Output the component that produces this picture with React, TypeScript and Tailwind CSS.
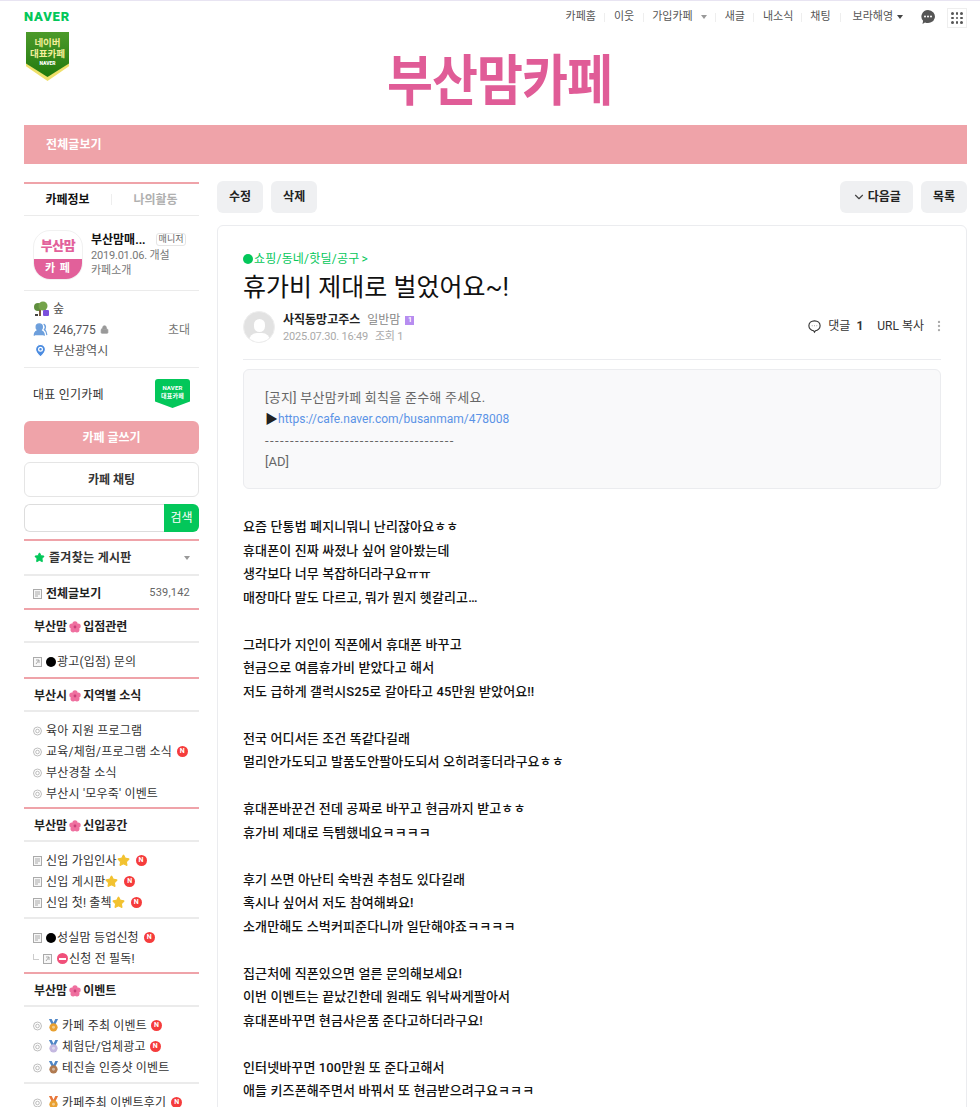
import { ChevronDown, EllipsisVertical, Lock, MapPin, Star, UsersRound } from 'lucide-react';
import type { ReactNode } from 'react';

const FONT = "font-['Roboto','Noto_Sans_CJK_KR',sans-serif]";

function Flower() {
  return (
    <svg viewBox="0 0 12 12" className="w-[12px] h-[12px] mx-[2px] shrink-0">
      <circle cx="6" cy="2.9" r="2.6" fill="#ef6f9f" />
      <circle cx="9.1" cy="5.1" r="2.6" fill="#ef6f9f" />
      <circle cx="7.9" cy="8.8" r="2.6" fill="#ef6f9f" />
      <circle cx="4.1" cy="8.8" r="2.6" fill="#ef6f9f" />
      <circle cx="2.9" cy="5.1" r="2.6" fill="#ef6f9f" />
      <circle cx="6" cy="6" r="1.4" fill="#c93f78" />
    </svg>
  );
}

function NewBadge({ className = '' }: { className?: string }) {
  return (
    <span className={`inline-flex items-center justify-center w-[11px] h-[11px] rounded-full bg-[#f53c3c] text-white text-[7px] font-bold leading-none shrink-0 ${className}`}>
      N
    </span>
  );
}

function DocIcon() {
  return (
    <svg viewBox="0 0 9 10" className="w-[9px] h-[10px] shrink-0" fill="none" stroke="#aaa">
      <rect x="0.5" y="0.5" width="8" height="9" fill="#f7f7f7" />
      <path d="M2 3h5M2 5h5M2 7h3" />
    </svg>
  );
}

function LinkIcon() {
  return (
    <svg viewBox="0 0 9 10" className="w-[9px] h-[10px] shrink-0" fill="none" stroke="#aaa">
      <rect x="0.5" y="0.5" width="8" height="9" fill="#f7f7f7" />
      <path d="M3 3h3v3M6 3L3 7" />
    </svg>
  );
}

function RingIcon() {
  return (
    <svg viewBox="0 0 10 10" className="w-[9px] h-[10px] shrink-0" fill="none" stroke="#b5b5b5">
      <circle cx="5" cy="5" r="4.4" />
      <circle cx="5" cy="5" r="2" />
    </svg>
  );
}

function GoldStar() {
  return <Star className="w-[13px] h-[13px] shrink-0 text-[#f2c230] fill-[#f2c230]" />;
}

function Medal({ color, ribbon = '#4f86c6' }: { color: string; ribbon?: string }) {
  return (
    <svg viewBox="0 0 12 14" className="w-[11px] h-[13px] ml-[2px] mr-[3px] shrink-0">
      <path d="M1 0h3l2 4 2-4h3L8 6H4z" fill={ribbon} />
      <circle cx="6" cy="9" r="4.5" fill={color} />
      <circle cx="6" cy="9" r="1.6" fill="#fff" fillOpacity="0.45" />
    </svg>
  );
}

function BlackDot() {
  return <span className="inline-block w-[10px] h-[10px] rounded-full bg-black mr-[1px] shrink-0" />;
}

function Row({ icon, children }: { icon: ReactNode; children: ReactNode }) {
  return (
    <div className="h-[21px] flex items-center text-[12px] tracking-[0.2px] text-[#333] whitespace-nowrap pl-[9px]">
      {icon}
      <span className="ml-[4px] flex items-center">{children}</span>
    </div>
  );
}

function SectionHead({ left, right }: { left: string; right: string }) {
  return (
    <div className="h-[33px] pt-[3px] border-t-2 border-[#efa3a9] flex items-center pl-[10px] text-[12px] font-bold text-[#222]">
      {left}
      <Flower />
      {right}
    </div>
  );
}

function Group({ children, className = 'pb-[4px]' }: { children: ReactNode; className?: string }) {
  return <div className={`border-t-2 border-[#ebebeb] pt-[8px] ${className}`}>{children}</div>;
}

function Sidebar() {
  return (
    <aside className="w-[175px] shrink-0">
      <div className="border-t-2 border-[#efa3a9] h-[34px] flex items-center text-[12px] font-bold border-b border-b-[#ebebeb]">
        <div className="flex-1 text-center text-[#111]">카페정보</div>
        <div className="w-px h-[11px] bg-[#eee]" />
        <div className="flex-1 text-center text-[#b0b0b0]">나의활동</div>
      </div>

      <div className="h-[75px] border-b border-[#ebebeb] flex items-start pl-[9px] pt-[14px]">
        <div className="w-[50px] h-[50px] rounded-[17px] overflow-hidden shrink-0 flex flex-col border border-[#f1f1f1]">
          <div className="flex-1 flex items-center justify-center text-[13px] leading-none font-black text-[#e2609a] tracking-[-0.5px] pt-[1px]">
            부산맘
          </div>
          <div className="h-[20px] bg-[#e2609a] text-white text-[11px] font-bold flex items-center justify-center tracking-[1px]">
            카 페
          </div>
        </div>
        <div className="ml-[8px] mt-[1px]">
          <div className="flex items-center h-[17px]">
            <span className="text-[12px] font-bold text-[#111] whitespace-nowrap">부산맘매...</span>
            <span className="ml-[10px] border border-[#e5e5e5] rounded-[3px] text-[9px] px-[2px] h-[13px] flex items-center text-[#666] whitespace-nowrap">매니저</span>
          </div>
          <div className="text-[11px] text-[#777] leading-[15px] whitespace-nowrap tracking-[-0.2px]">2019.01.06. 개설</div>
          <div className="text-[11px] text-[#777] leading-[15px]">카페소개</div>
        </div>
      </div>

      <div className="h-[77px] border-b border-[#ebebeb] pl-[9px] pt-[7px] text-[12px] text-[#555]">
        <div className="h-[21px] flex items-center">
          <svg viewBox="0 0 16 16" className="w-[16px] h-[16px] shrink-0">
            <circle cx="5" cy="6" r="4" fill="#5f8f3e" />
            <circle cx="10" cy="5" r="4.5" fill="#74a34a" />
            <rect x="6" y="9" width="2" height="6" fill="#7a5a3a" />
            <rect x="2" y="13" width="3" height="2" fill="#444" />
            <rect x="10" y="9" width="6" height="6" rx="1" fill="#7b4fdc" />
          </svg>
          <span className="ml-[4px]">숲</span>
        </div>
        <div className="h-[21px] flex items-center">
          <UsersRound className="w-[15px] h-[15px] text-[#6d9fdc] fill-[#6d9fdc] shrink-0" />
          <span className="ml-[5px]">246,775</span>
          <Lock className="w-[9px] h-[9px] ml-[4px] text-[#999] fill-[#999]" />
          <span className="ml-auto mr-[9px] text-[#777]">초대</span>
        </div>
        <div className="h-[21px] flex items-center">
          <MapPin className="w-[15px] h-[15px] text-white fill-[#4a8be0] shrink-0" />
          <span className="ml-[5px]">부산광역시</span>
        </div>
      </div>

      <div className="h-[53px] flex items-center justify-between pl-[9px] pr-[9px] text-[12px] tracking-[0.2px] text-[#333]">
        <span>대표 인기카페</span>
        <div className="w-[35px] h-[29px] -mt-[2px] bg-[#03c75a] text-white text-[6px] font-bold leading-[8px] text-center pt-[5px] rounded-t-[3px] [clip-path:polygon(0_0,100%_0,100%_78%,50%_100%,0_78%)]">
          NAVER
          <br />
          대표카페
        </div>
      </div>

      <div className="h-[33px] rounded-[6px] bg-[#efa3a9] text-white text-[12px] font-bold flex items-center justify-center">카페 글쓰기</div>
      <div className="h-[35px] mt-[8px] rounded-[6px] border border-[#e5e5e5] text-[12px] font-bold text-[#333] flex items-center justify-center">카페 채팅</div>
      <div className="h-[28px] mt-[7px] flex">
        <div className="flex-1 rounded-l-[6px] border border-[#ddd] border-r-0" />
        <div className="w-[35px] rounded-r-[6px] bg-[#03c75a] text-white text-[12px] flex items-center justify-center">검색</div>
      </div>

      <div className="mt-[7px] h-[35px] border-t-2 border-[#efa3a9] flex items-center pl-[10px] pr-[9px] text-[12px] font-bold tracking-[0.3px] text-[#333]">
        <Star className="w-[11px] h-[11px] text-[#03c75a] fill-[#03c75a] mr-[4px]" />
        즐겨찾는 게시판
        <span className="ml-auto w-0 h-0 border-x-[3px] border-x-transparent border-t-[4px] border-t-[#999]" />
      </div>
      <div className="h-[34px] pt-[3px] border-t-2 border-[#ebebeb] flex items-center pl-[9px] pr-[9px] text-[12px]">
        <DocIcon />
        <span className="ml-[4px] font-bold text-[#222]">전체글보기</span>
        <span className="ml-auto text-[11px] tracking-[0.2px] text-[#666]">539,142</span>
      </div>

      <SectionHead left="부산맘" right="입점관련" />
      <Group className="pb-[5px]">
        <Row icon={<LinkIcon />}>
          <BlackDot />광고(입점) 문의
        </Row>
      </Group>

      <SectionHead left="부산시" right="지역별 소식" />
      <Group className="pb-[3px]">
        <Row icon={<RingIcon />}>육아 지원 프로그램</Row>
        <Row icon={<RingIcon />}>
          교육/체험/프로그램 소식<NewBadge className="ml-[5px]" />
        </Row>
        <Row icon={<RingIcon />}>부산경찰 소식</Row>
        <Row icon={<RingIcon />}>부산시 '모우죽' 이벤트</Row>
      </Group>

      <SectionHead left="부산맘" right="신입공간" />
      <Group>
        <Row icon={<DocIcon />}>
          신입 가입인사<GoldStar /><NewBadge className="ml-[6px]" />
        </Row>
        <Row icon={<DocIcon />}>
          신입 게시판<GoldStar /><NewBadge className="ml-[6px]" />
        </Row>
        <Row icon={<DocIcon />}>
          신입 첫! 출첵<GoldStar /><NewBadge className="ml-[6px]" />
        </Row>
      </Group>
      <Group className="pb-[3px]">
        <Row icon={<DocIcon />}>
          <BlackDot />성실맘 등업신청<NewBadge className="ml-[5px]" />
        </Row>
        <Row
          icon={
            <>
              <span className="w-[6px] h-[6px] border-l border-b border-[#ccc] mr-[4px] -mt-[4px]" />
              <LinkIcon />
            </>
          }
        >
          <span className="w-[11px] h-[11px] rounded-full bg-[#f0507a] mr-[1px] ml-[1px] flex items-center justify-center">
            <span className="w-[7px] h-[2px] bg-white" />
          </span>
          신청 전 필독!
        </Row>
      </Group>

      <SectionHead left="부산맘" right="이벤트" />
      <Group>
        <Row icon={<RingIcon />}>
          <Medal color="#e8a030" />카페 주최 이벤트<NewBadge className="ml-[4px]" />
        </Row>
        <Row icon={<RingIcon />}>
          <Medal color="#c4b8e0" />체험단/업체광고<NewBadge className="ml-[4px]" />
        </Row>
        <Row icon={<RingIcon />}>
          <Medal color="#b07a50" />테진슬 인증샷 이벤트
        </Row>
      </Group>
      <Group>
        <Row icon={<RingIcon />}>
          <Medal color="#e8a030" ribbon="#e8763a" />카페주최 이벤트후기<NewBadge className="ml-[5px]" />
        </Row>
      </Group>
    </aside>
  );
}

function GrayButton({ children }: { children: ReactNode }) {
  return (
    <div className="h-[32px] rounded-[6px] bg-[#eff0f2] text-[12px] font-bold text-[#222] flex items-center justify-center px-[12px] whitespace-nowrap">
      {children}
    </div>
  );
}

const BODY = [
  '요즘 단통법 폐지니뭐니 난리잖아요ㅎㅎ',
  '휴대폰이 진짜 싸졌나 싶어 알아봤는데',
  '생각보다 너무 복잡하더라구요ㅠㅠ',
  '매장마다 말도 다르고, 뭐가 뭔지 헷갈리고…',
  '',
  '그러다가 지인이 직폰에서 휴대폰 바꾸고',
  '현금으로 여름휴가비 받았다고 해서',
  '저도 급하게 갤럭시S25로 갈아타고 45만원 받았어요!!',
  '',
  '전국 어디서든 조건 똑같다길래',
  '멀리안가도되고 발품도안팔아도되서 오히려좋더라구요ㅎㅎ',
  '',
  '휴대폰바꾼건 전데 공짜로 바꾸고 현금까지 받고ㅎㅎ',
  '휴가비 제대로 득템했네요ㅋㅋㅋㅋ',
  '',
  '후기 쓰면 아난티 숙박권 추첨도 있다길래',
  '혹시나 싶어서 저도 참여해봐요!',
  '소개만해도 스벅커피준다니까 일단해야죠ㅋㅋㅋㅋ',
  '',
  '집근처에 직폰있으면 얼른 문의해보세요!',
  '이번 이벤트는 끝났긴한데 원래도 워낙싸게팔아서',
  '휴대폰바꾸면 현금사은품 준다고하더라구요!',
  '',
  '인터넷바꾸면 100만원 또 준다고해서',
  '애들 키즈폰해주면서 바꿔서 또 현금받으려구요ㅋㅋㅋ',
];

function Article() {
  return (
    <main className="flex-1 min-w-0 -mt-[1px]">
      <div className="flex items-center gap-[8px]">
        <GrayButton>수정</GrayButton>
        <GrayButton>삭제</GrayButton>
        <div className="flex-1" />
        <GrayButton>
          <ChevronDown className="w-[14px] h-[14px] mr-[2px] text-[#444]" />
          다음글
        </GrayButton>
        <GrayButton>목록</GrayButton>
      </div>

      <article className="mt-[12px] h-[1000px] border border-[#ebecef] rounded-[6px] px-[25px] pt-[25px]">
        <div className="text-[12px] tracking-[0.2px] leading-[16px] text-[#03c75a] flex items-center">
          <span className="w-[10px] h-[10px] rounded-full bg-[#03c75a] mr-[1px]" />
          쇼핑/동네/핫딜/공구
          <span className="ml-[2px]">&gt;</span>
        </div>
        <h1 className="mt-[5px] text-[25px] leading-[32px] text-[#111] whitespace-nowrap">휴가비 제대로 벌었어요~!</h1>

        <div className="mt-[7px] flex items-start">
          <div className="w-[32px] h-[32px] rounded-full bg-[#e2e2e2] overflow-hidden relative shrink-0 border border-[#eee]">
            <div className="absolute left-[10px] top-[7px] w-[11px] h-[13px] rounded-full bg-white" />
            <div className="absolute left-[5px] top-[21px] w-[21px] h-[14px] rounded-t-[8px] bg-white" />
          </div>
          <div className="ml-[8px]">
            <div className="flex items-center h-[18px] text-[12px]">
              <span className="font-bold text-[#222]">사직동망고주스</span>
              <span className="ml-[7px] text-[#888]">일반맘</span>
              <span className="ml-[5px] w-[9px] h-[9px] bg-[#b78df0] text-white text-[7px] font-bold flex items-center justify-center">1</span>
            </div>
            <div className="text-[11px] leading-[16px] text-[#aaa] whitespace-nowrap tracking-[-0.2px]">
              2025.07.30. 16:49<span className="ml-[7px]">조회 1</span>
            </div>
          </div>
          <div className="ml-auto -mr-[5px] flex items-center h-[30px] text-[12px] text-[#333]">
            <svg viewBox="0 0 16 16" className="w-[15px] h-[15px]" fill="none" stroke="#333" strokeWidth="1.2">
              <path d="M8 2C4.5 2 2 4.3 2 7.2s2.5 5.2 5 5.3L8 14l1-1.5c2.5-.1 5-2.4 5-5.3S11.5 2 8 2z" />
              <circle cx="5.5" cy="7.3" r="0.5" fill="#333" stroke="none" />
              <circle cx="8" cy="7.3" r="0.5" fill="#333" stroke="none" />
              <circle cx="10.5" cy="7.3" r="0.5" fill="#333" stroke="none" />
            </svg>
            <span className="ml-[6px]">댓글</span>
            <span className="ml-[6px] font-bold">1</span>
            <span className="ml-[14px]">URL 복사</span>
            <EllipsisVertical className="w-[14px] h-[14px] ml-[8px] text-[#aaa]" />
          </div>
        </div>

        <div className="mt-[14px] border-t border-[#ebecef]" />

        <div className="mt-[9px] h-[120px] rounded-[6px] bg-[#f9f9fa] border border-[#ebecef] px-[21px] pt-[17px] text-[13px] leading-[21px] text-[#666]">
          <div className="tracking-[0.25px]">[공지] 부산맘카페 회칙을 준수해 주세요.</div>
          <div>
            <span className="text-[#222]">▶</span>
            <span className="text-[12px] text-[#5b93e6]">https://cafe.naver.com/busanmam/478008</span>
          </div>
          <div className="tracking-[1.4px]">--------------------------------------</div>
          <div>[AD]</div>
        </div>

        <div className="mt-[26px] text-[13px] tracking-[0.12px] leading-[23.5px] font-medium text-[#111] whitespace-nowrap">
          {BODY.map((line, i) => (
            <div key={i} className="h-[23.5px]">
              {line}
            </div>
          ))}
        </div>
      </article>
    </main>
  );
}

export default function App() {
  return (
    <div className={`${FONT} h-[1107px] overflow-hidden bg-white border-t border-[#e8e4f2]`}>
      <div className="ml-[24px] mr-[13px]">
        <header className="h-[124px] relative">
          <div className="flex items-start justify-between pt-[8px]">
            <div className="text-[13px] leading-[16px] font-black text-[#03c75a] tracking-[0.8px]">NAVER</div>
            <nav className="flex items-center h-[16px] text-[11px] text-[#555] whitespace-nowrap">
              <span>카페홈</span>
              <span className="w-px h-[9px] bg-[#eee] mx-[8.5px]" />
              <span>이웃</span>
              <span className="w-px h-[9px] bg-[#eee] mx-[8.5px]" />
              <span>가입카페</span>
              <span className="ml-[8px] w-0 h-0 border-x-[3px] border-x-transparent border-t-[4px] border-t-[#999]" />
              <span className="w-px h-[9px] bg-[#eee] mx-[8.5px]" />
              <span>새글</span>
              <span className="w-px h-[9px] bg-[#eee] mx-[8.5px]" />
              <span>내소식</span>
              <span className="w-px h-[9px] bg-[#eee] mx-[8px]" />
              <span>채팅</span>
              <span className="w-px h-[9px] bg-[#eee] mx-[9px]" />
              <span className="ml-[3px]">보라해영</span>
              <span className="ml-[4px] w-0 h-0 border-x-[3px] border-x-transparent border-t-[4px] border-t-[#444]" />
              <svg viewBox="0 0 16 16" className="w-[16px] h-[16px] ml-[17px]">
                <path d="M8 1a7 6.5 0 1 1-3 12.4L2.5 15l.6-3.3A7 6.5 0 0 1 8 1z" fill="#555" />
                <circle cx="5" cy="7.5" r="1" fill="#fff" />
                <circle cx="8" cy="7.5" r="1" fill="#fff" />
                <circle cx="11" cy="7.5" r="1" fill="#fff" />
              </svg>
              <span className="ml-[11px] w-[20px] h-[20px] border border-[#eee] grid grid-cols-3 gap-[2px] p-[3px] mt-[2px]">
                {[0, 1, 2, 3, 4, 5, 6, 7, 8].map(i => (
                  <span key={i} className="bg-[#555] rounded-full" />
                ))}
              </span>
            </nav>
          </div>
          {/* badge over the logo row */}
          <div className="absolute left-[2px] top-[31px] w-[43px] h-[49px] bg-[#efe06a] [clip-path:polygon(0_0,100%_0,100%_70%,50%_100%,0_70%)]">
            <div className="h-[45px] bg-gradient-to-b from-[#4c9a2a] to-[#1f7a0c] text-[#f3ef9a] text-[9.5px] font-bold leading-[11px] text-center pt-[5px] [clip-path:polygon(0_0,100%_0,100%_70%,50%_100%,0_70%)]">
              네이버
              <br />
              대표카페
              <div className="text-[5px] leading-[8px] font-black text-white">NAVER</div>
            </div>
          </div>
          <div className="absolute left-[8px] right-0 top-[45px] text-center text-[50px] leading-[70px] font-bold text-[#e05c97] tracking-[-1px] scale-y-[1.1]">
            부산맘카페
          </div>
        </header>

        <div className="h-[39px] bg-[#efa3a9] flex items-center pl-[22px] text-[12px] tracking-[0.1px] font-bold text-white">전체글보기</div>

        <div className="mt-[18px] flex gap-[18px]">
          <Sidebar />
          <Article />
        </div>
      </div>
    </div>
  );
}
